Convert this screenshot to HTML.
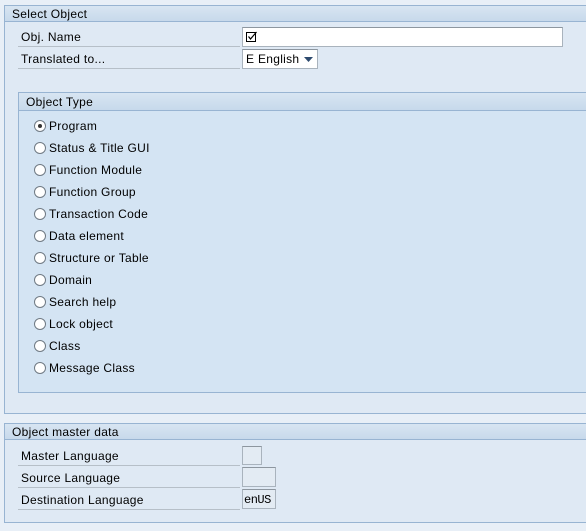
<!DOCTYPE html>
<html><head><style>
*{margin:0;padding:0;box-sizing:border-box}
body{width:586px;height:531px;overflow:hidden;background:#e8eff7;font-family:"Liberation Sans",Arial,sans-serif;font-size:12px;letter-spacing:0.3px;color:#000;position:relative}
.box{position:absolute;border:1px solid #98b4d2;border-right:none;background:#dfe9f4}
.hdr{position:absolute;left:0;right:0;top:0;height:16px;background:linear-gradient(#d8e5f2,#c7d9eb);border-bottom:1px solid #98b4d2;padding-left:7px;line-height:16px}
.lbl{position:absolute;left:18px;width:222px;height:21px;border-bottom:1px solid #b6bfc8;padding-left:3px;line-height:22px}
.inp{position:absolute;background:#fff;border:1px solid #a9b3bd;border-top-color:#8d969f}
.rad{position:absolute;left:34px;line-height:14px;height:14px}
.rad i{display:inline-block;width:12px;height:12px;border:1px solid #707a84;border-radius:50%;background:#fff;vertical-align:-2px;margin-right:3px;position:relative}
.rad i.on:after{content:"";position:absolute;left:3px;top:3px;width:4px;height:4px;border-radius:50%;background:#333}
</style></head><body>
<div class="box" style="left:4px;top:5px;width:582px;height:409px">
  <div class="hdr">Select Object</div>
</div>
<div class="lbl" style="top:26px">Obj. Name</div>
<div class="inp" style="left:242px;top:27px;width:321px;height:20px">
 <svg width="12" height="12" style="position:absolute;left:3px;top:3px" viewBox="0 0 12 12"><rect x="0.5" y="1.5" width="9" height="9" fill="none" stroke="#000"/><path d="M2.5 5.5 L4.5 8 L10.5 1" fill="none" stroke="#000" stroke-width="1.2"/></svg>
</div>
<div class="lbl" style="top:48px">Translated to...</div>
<div class="inp" style="left:242px;top:49px;width:76px;height:20px;line-height:19px;padding-left:3px">E English
 <svg width="9" height="5" style="position:absolute;right:4px;top:7px"><path d="M0 0H9L4.5 5Z" fill="#2d4a6e"/></svg>
</div>
<div class="box" style="left:18px;top:92px;width:568px;height:301px;background:#d4e4f3">
  <div class="hdr" style="height:18px;line-height:19px">Object Type</div>
</div>
<div class="rad" style="top:119px"><i class="on"></i>Program</div>
<div class="rad" style="top:141px"><i></i>Status &amp; Title GUI</div>
<div class="rad" style="top:163px"><i></i>Function Module</div>
<div class="rad" style="top:185px"><i></i>Function Group</div>
<div class="rad" style="top:207px"><i></i>Transaction Code</div>
<div class="rad" style="top:229px"><i></i>Data element</div>
<div class="rad" style="top:251px"><i></i>Structure or Table</div>
<div class="rad" style="top:273px"><i></i>Domain</div>
<div class="rad" style="top:295px"><i></i>Search help</div>
<div class="rad" style="top:317px"><i></i>Lock object</div>
<div class="rad" style="top:339px"><i></i>Class</div>
<div class="rad" style="top:361px"><i></i>Message Class</div>

<div class="box" style="left:4px;top:423px;width:582px;height:100px">
  <div class="hdr">Object master data</div>
</div>
<div class="lbl" style="top:445px">Master Language</div>
<div class="inp" style="left:242px;top:446px;width:20px;height:19px;background:#e3ebf3"></div>
<div class="lbl" style="top:467px">Source Language</div>
<div class="inp" style="left:242px;top:467px;width:34px;height:20px;background:#e3ebf3"></div>
<div class="lbl" style="top:489px">Destination Language</div>
<div class="inp" style="left:242px;top:489px;width:34px;height:20px;background:#e3ebf3;font-family:'Liberation Mono',monospace;font-size:12px;line-height:20px;padding-left:1px;letter-spacing:-0.5px">enUS</div>
</body></html>
